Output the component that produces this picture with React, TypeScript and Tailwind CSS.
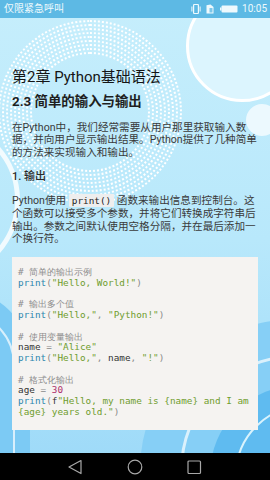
import React from 'react';

const sans = "font-['Roboto','Noto_Sans_CJK_SC',sans-serif]";
const mono = "font-['DejaVu_Sans_Mono','Liberation_Mono',monospace]";

const RINGS = [60, 64, 68, 72, 76, 80, 84, 88, 92];

function Wallpaper() {
  return (
    <div className="absolute inset-0 z-0 overflow-hidden bg-[#bde9fb]">
      <div className="absolute left-0 top-0 h-[480px] w-[270px] bg-[linear-gradient(180deg,#c6eefc_0%,#b8e8fb_50%,#9cd9f8_100%)]" />
      {/* bubble top right */}
      <div className="absolute left-[186px] top-[-10px] h-[112px] w-[112px] rounded-full border-[3px] border-white bg-[#dcf5fe]" />
      <div className="absolute left-[246px] top-[104px] h-[32px] w-[32px] rounded-full bg-white/70" />
      {/* dotted rings */}
      {RINGS.map((r) => (
        <div
          key={r}
          className="absolute rounded-full border-2 border-dotted border-white"
          style={{ left: 90 - r, top: 112 - r, width: r * 2, height: r * 2 }}
        />
      ))}
      {/* left arc */}
      <div className="absolute left-[-140px] top-[120px] h-[160px] w-[160px] rounded-full border-[5px] border-white/80" />
      {/* bottom swirls */}
      <div className="absolute left-[140px] top-[320px] h-[300px] w-[380px] rounded-full bg-[#86cff6]" />
      <div className="absolute left-[180px] top-[355px] h-[230px] w-[300px] rounded-full border-[3px] border-white/70" />
      <div className="absolute left-[210px] top-[385px] h-[180px] w-[240px] rounded-full bg-[#5fbbf0]" />
      <div className="absolute left-[235px] top-[405px] h-[140px] w-[190px] rounded-full border-2 border-[#d9f3fd]" />
      <div className="absolute left-[-110px] top-[290px] h-[260px] w-[140px] rounded-full bg-[#7ccaf4]" />
      <div className="absolute left-[-95px] top-[310px] h-[220px] w-[110px] rounded-full border-2 border-white/70" />
    </div>
  );
}

function StatusBar() {
  return (
    <div className="relative z-10 flex h-[18px] items-center justify-between bg-[#5db9e4] pl-[4px] pr-[3px] text-[10px] text-[#eef9fd]">
      <span className="leading-none">仅限紧急呼叫</span>
      <div className="flex items-center">
        <svg width="10" height="10" viewBox="0 0 10 10" className="mr-[5px]">
          <rect x="2.6" y="0.5" width="4.8" height="9" rx="0.8" fill="none" stroke="#eef9fd" strokeWidth="1.2" />
          <rect x="0.4" y="2.5" width="1" height="5" fill="#eef9fd" />
          <rect x="8.6" y="2.5" width="1" height="5" fill="#eef9fd" />
        </svg>
        <svg width="8" height="10" viewBox="0 0 8 10" className="mr-[6px]">
          <path d="M0.5 1.2 L4.5 0.5 L7.5 3 L7.5 9.5 L0.5 9.5 Z" fill="#eef9fd" />
          <rect x="3.5" y="4" width="3" height="4.5" fill="#7cc7ea" />
        </svg>
        <svg width="18" height="8" viewBox="0 0 18 8" className="mr-[4px]">
          <rect x="0" y="2.5" width="1.5" height="3" fill="#eef9fd" />
          <rect x="1.5" y="0.5" width="16" height="7" rx="1" fill="#eef9fd" />
        </svg>
        <span className="leading-none">10:05</span>
      </div>
    </div>
  );
}

function NavBar() {
  return (
    <div className="relative z-10 flex h-[27px] items-center bg-black">
      <svg className="absolute left-[67px] top-[6px]" width="16" height="16" viewBox="0 0 16 16">
        <path d="M14 1.5 L2 8 L14 14.5 Z" fill="none" stroke="#a8a8a8" strokeWidth="1.2" strokeLinejoin="round" />
      </svg>
      <svg className="absolute left-[127px] top-[6px]" width="16" height="16" viewBox="0 0 16 16">
        <circle cx="8" cy="8" r="6.8" fill="none" stroke="#a8a8a8" strokeWidth="1.2" />
      </svg>
      <svg className="absolute left-[187px] top-[7px]" width="15" height="15" viewBox="0 0 15 15">
        <rect x="1" y="1" width="12.5" height="12.5" rx="1" fill="none" stroke="#a8a8a8" strokeWidth="1.2" />
      </svg>
    </div>
  );
}

const cm = 'text-[#8d8d8d]';
const fn = 'text-[#2c86ae]';
const st = 'text-[#6f9d2d]';
const pu = 'text-[#8a8a8a]';
const vr = 'text-[#333333]';
const nu = 'text-[#ad2f6c]';

function CodeBlock() {
  return (
    <div className={`mt-[10.5px] w-[246px] bg-[#f5f3f1] pb-[12px] pl-[6px] pt-[10.5px] ${mono} text-[9.35px] leading-[10.75px] whitespace-pre`}>
      <div className={cm}># 简单的输出示例</div>
      <div><span className={fn}>print</span><span className={pu}>(</span><span className={st}>"Hello, World!"</span><span className={pu}>)</span></div>
      <div> </div>
      <div className={cm}># 输出多个值</div>
      <div><span className={fn}>print</span><span className={pu}>(</span><span className={st}>"Hello,"</span><span className={pu}>, </span><span className={st}>"Python!"</span><span className={pu}>)</span></div>
      <div> </div>
      <div className={cm}># 使用变量输出</div>
      <div><span className={vr}>name </span><span className={pu}>=</span> <span className={st}>"Alice"</span></div>
      <div><span className={fn}>print</span><span className={pu}>(</span><span className={st}>"Hello,"</span><span className={pu}>, </span><span className={vr}>name</span><span className={pu}>, </span><span className={st}>"!"</span><span className={pu}>)</span></div>
      <div> </div>
      <div className={cm}># 格式化输出</div>
      <div><span className={vr}>age </span><span className={pu}>=</span> <span className={nu}>30</span></div>
      <div><span className={fn}>print</span><span className={pu}>(</span><span className={vr}>f</span><span className={st}>"Hello, my name is {'{name}'} and I am</span></div>
      <div><span className={st}>{'{age}'} years old."</span><span className={pu}>)</span></div>
    </div>
  );
}

export default function App() {
  return (
    <div className={`relative flex h-[480px] w-[270px] flex-col overflow-hidden ${sans}`}>
      <Wallpaper />
      <StatusBar />
      <div className="relative z-10 flex flex-1 flex-col px-[12px]">
        <h1 className="mt-[49px] text-[15px] leading-[20px] font-normal text-[#151515]">第2章 Python基础语法</h1>
        <h2 className="mt-[6px] text-[13.4px] leading-[18px] font-bold text-[#1e1e1e]">2.3 简单的输入与输出</h2>
        <p className="mt-[10.5px] text-[10.6px] leading-[12.6px] text-[#3a3a3a] whitespace-nowrap">
          在Python中，我们经常需要从用户那里获取输入数<br />
          据，并向用户显示输出结果。Python提供了几种简单<br />
          的方法来实现输入和输出。
        </p>
        <h3 className="mt-[9.5px] text-[11px] leading-[16px] font-medium text-[#2a2a2a]">1. 输出</h3>
        <p className="mt-[10.7px] text-[10.6px] leading-[12.67px] text-[#3a3a3a] whitespace-nowrap">
          Python使用 <code className={`rounded-[1px] bg-[#eeeeee] px-[3px] py-[1px] ${mono} text-[9.35px] text-[#222]`}>print()</code> 函数来输出信息到控制台。这<br />
          个函数可以接受多个参数，并将它们转换成字符串后<br />
          输出。参数之间默认使用空格分隔，并在最后添加一<br />
          个换行符。
        </p>
        <CodeBlock />
      </div>
      <NavBar />
    </div>
  );
}
